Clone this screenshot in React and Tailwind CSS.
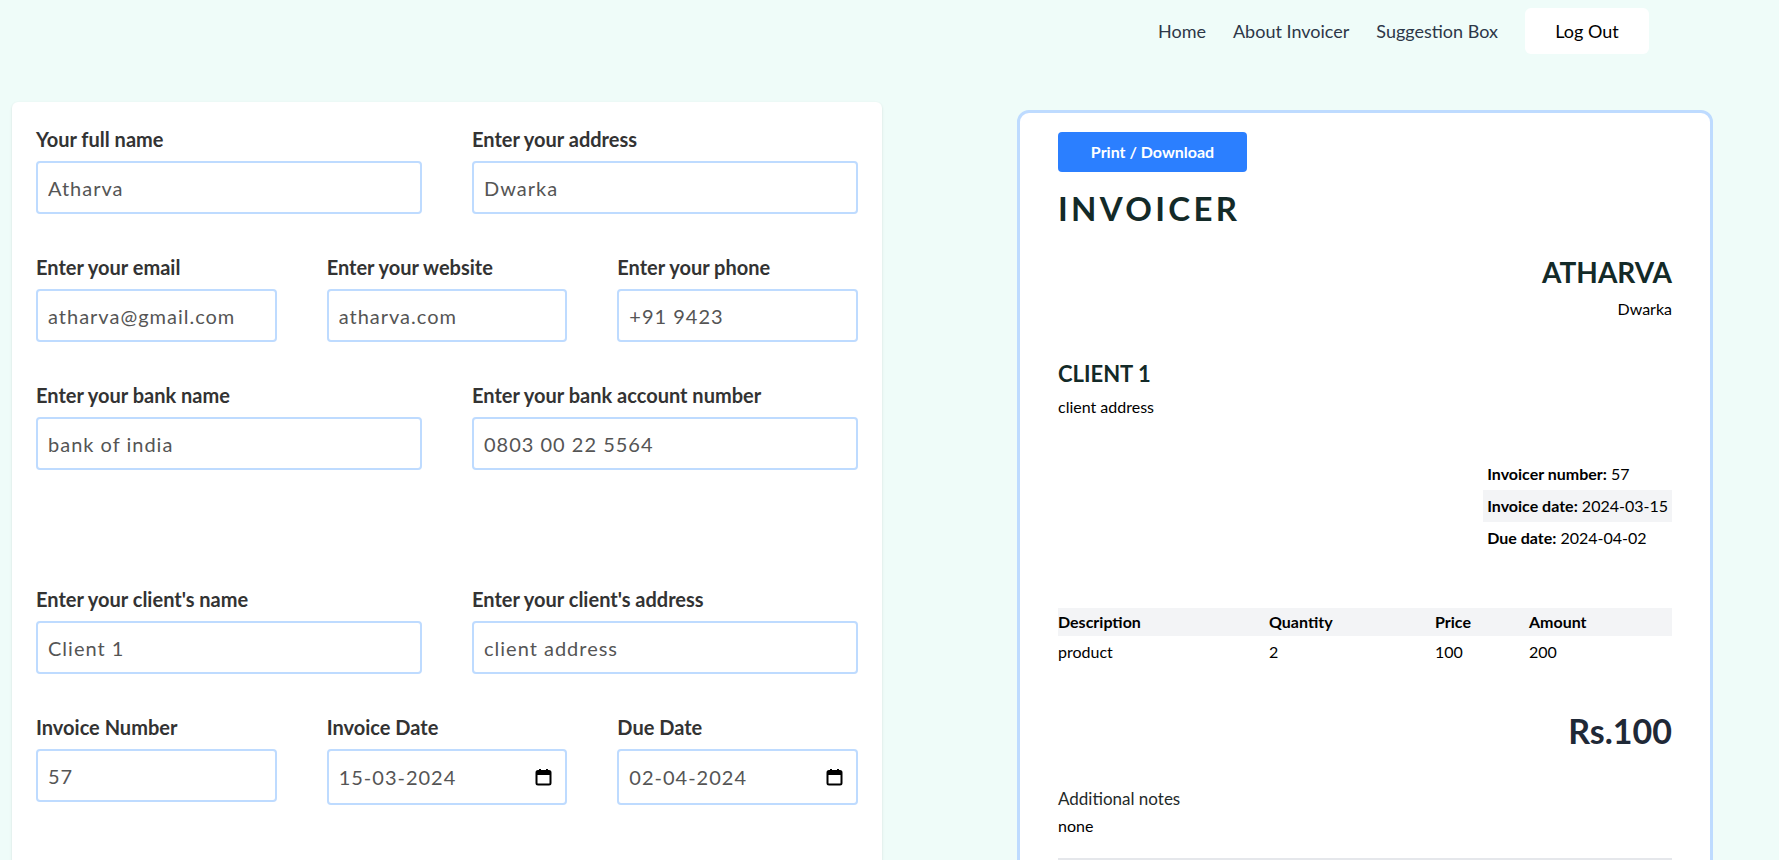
import React from "react";

const font = { fontFamily: "Lato, 'Open Sans', sans-serif" };

function Field({ label, value, date }) {
  return (
    <div className="flex flex-col">
      <label className="text-xl font-bold leading-7 text-[#333] mb-2">{label}</label>
      {date ? (
        <div className="h-[56px] border-2 border-blue-200 rounded flex items-center justify-between pl-[10px] pr-[13px] text-xl tracking-[0.05em] text-[#555]">
          <span>{value}</span>
          <svg width="17" height="18" viewBox="0 0 17 18" className="text-black">
            <rect x="1.5" y="3" width="14" height="13.5" rx="1.5" fill="none" stroke="currentColor" strokeWidth="2" />
            <rect x="1.5" y="3" width="14" height="4" fill="currentColor" />
            <rect x="4" y="1" width="2" height="3" fill="currentColor" />
            <rect x="11" y="1" width="2" height="3" fill="currentColor" />
          </svg>
        </div>
      ) : (
        <input
          readOnly
          value={value}
          className="h-[53px] border-2 border-blue-200 rounded px-[10px] text-xl tracking-[0.05em] text-[#555] outline-none"
          style={font}
        />
      )}
    </div>
  );
}

export default function App() {
  return (
    <div className="min-h-screen bg-[#effcf9] overflow-hidden" style={font}>
      <header className="flex justify-end items-center gap-[27px] pt-2 pr-[130px] text-lg text-[#2d3748]">
        <a className="cursor-pointer">Home</a>
        <a className="cursor-pointer">About Invoicer</a>
        <a className="cursor-pointer">Suggestion Box</a>
        <button className="w-[124px] h-[46px] bg-white rounded-md text-black text-lg">Log Out</button>
      </header>

      <main className="flex items-start pt-[48px] pl-3">
        <section className="w-[870px] h-[800px] bg-white rounded-md shadow-sm px-6 pt-[23px] flex flex-col gap-[39px]">
          <div className="grid grid-cols-2 gap-x-[50px]">
            <Field label="Your full name" value="Atharva" />
            <Field label="Enter your address" value="Dwarka" />
          </div>
          <div className="grid grid-cols-3 gap-x-[50px]">
            <Field label="Enter your email" value="atharva@gmail.com" />
            <Field label="Enter your website" value="atharva.com" />
            <Field label="Enter your phone" value="+91 9423" />
          </div>
          <div className="grid grid-cols-2 gap-x-[50px]">
            <Field label="Enter your bank name" value="bank of india" />
            <Field label="Enter your bank account number" value="0803 00 22 5564" />
          </div>
          <div className="h-[37px]" />
          <div className="grid grid-cols-2 gap-x-[50px]">
            <Field label="Enter your client's name" value="Client 1" />
            <Field label="Enter your client's address" value="client address" />
          </div>
          <div className="grid grid-cols-3 gap-x-[50px] items-start">
            <Field label="Invoice Number" value="57" />
            <Field label="Invoice Date" value="15-03-2024" date />
            <Field label="Due Date" value="02-04-2024" date />
          </div>
        </section>

        <section className="ml-[135px] mt-2 w-[696px] h-[800px] bg-white border-[3px] border-blue-200 rounded-xl pt-[19px] px-[38px]">
          <button className="w-[189px] h-10 bg-blue-500 text-white rounded text-base font-bold">
            Print / Download
          </button>
          <h1 className="mt-4 text-[33px] leading-[40px] font-bold tracking-[0.1em] text-[#132a28]">INVOICER</h1>

          <div className="mt-[27px] text-right">
            <h2 className="text-[28px] leading-[34px] font-bold text-[#132a28]">ATHARVA</h2>
            <p className="mt-2 text-base leading-6 text-black">Dwarka</p>
          </div>

          <div className="mt-[39px]">
            <h2 className="text-[22px] leading-7 font-bold text-[#132a28]">CLIENT 1</h2>
            <p className="mt-2 text-base leading-[22px] text-black">client address</p>
          </div>

          <div className="mt-10 flex justify-end">
            <table className="text-base text-black">
              <tbody>
                <tr className="h-[32px]">
                  <td className="px-1"><span className="font-bold">Invoicer number:</span> 57</td>
                </tr>
                <tr className="h-[32px] bg-gray-100">
                  <td className="px-1"><span className="font-bold">Invoice date:</span> 2024-03-15</td>
                </tr>
                <tr className="h-[32px]">
                  <td className="px-1"><span className="font-bold">Due date:</span> 2024-04-02</td>
                </tr>
              </tbody>
            </table>
          </div>

          <table className="mt-[54px] w-full text-base text-black text-left">
            <thead>
              <tr className="h-[28px] bg-gray-100">
                <th className="w-[211px] font-bold">Description</th>
                <th className="w-[166px] font-bold">Quantity</th>
                <th className="w-[94px] font-bold">Price</th>
                <th className="font-bold">Amount</th>
              </tr>
            </thead>
            <tbody>
              <tr className="h-[32px]">
                <td>product</td>
                <td>2</td>
                <td>100</td>
                <td>200</td>
              </tr>
            </tbody>
          </table>

          <p className="mt-[43px] text-right text-[34px] leading-[40px] font-bold text-[#1f2937]">Rs.100</p>

          <div className="mt-[36px]">
            <p className="text-[17px] leading-6 text-[#1f2a2a]">Additional notes</p>
            <p className="mt-[3px] text-base leading-6 text-black">none</p>
          </div>
          <div className="mt-5 border-t-2 border-gray-200" />
        </section>
      </main>
    </div>
  );
}
